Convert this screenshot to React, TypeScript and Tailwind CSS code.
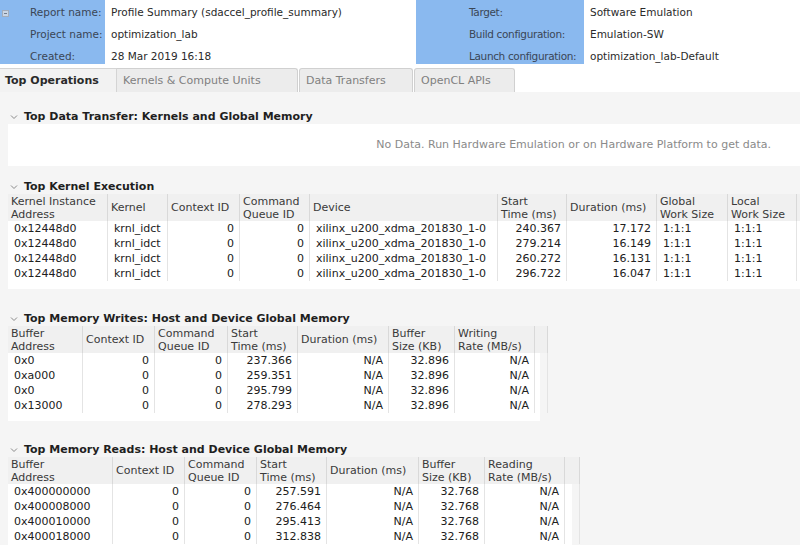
import React from "react";

type Col = { h: string[]; right?: boolean };

const kernelCols: Col[] = [
  { h: ["Kernel Instance", "Address"] },
  { h: ["Kernel"] },
  { h: ["Context ID"], right: true },
  { h: ["Command", "Queue ID"], right: true },
  { h: ["Device"] },
  { h: ["Start", "Time (ms)"], right: true },
  { h: ["Duration (ms)"], right: true },
  { h: ["Global", "Work Size"] },
  { h: ["Local", "Work Size"] },
  { h: [] },
];

const kernelRows = [
  ["0x12448d0", "krnl_idct", "0", "0", "xilinx_u200_xdma_201830_1-0", "240.367", "17.172", "1:1:1", "1:1:1", ""],
  ["0x12448d0", "krnl_idct", "0", "0", "xilinx_u200_xdma_201830_1-0", "279.214", "16.149", "1:1:1", "1:1:1", ""],
  ["0x12448d0", "krnl_idct", "0", "0", "xilinx_u200_xdma_201830_1-0", "260.272", "16.131", "1:1:1", "1:1:1", ""],
  ["0x12448d0", "krnl_idct", "0", "0", "xilinx_u200_xdma_201830_1-0", "296.722", "16.047", "1:1:1", "1:1:1", ""],
];

const writeCols: Col[] = [
  { h: ["Buffer", "Address"] },
  { h: ["Context ID"], right: true },
  { h: ["Command", "Queue ID"], right: true },
  { h: ["Start", "Time (ms)"], right: true },
  { h: ["Duration (ms)"], right: true },
  { h: ["Buffer", "Size (KB)"], right: true },
  { h: ["Writing", "Rate (MB/s)"], right: true },
  { h: [] },
];

const writeRows = [
  ["0x0", "0", "0", "237.366", "N/A", "32.896", "N/A", ""],
  ["0xa000", "0", "0", "259.351", "N/A", "32.896", "N/A", ""],
  ["0x0", "0", "0", "295.799", "N/A", "32.896", "N/A", ""],
  ["0x13000", "0", "0", "278.293", "N/A", "32.896", "N/A", ""],
];

const readCols: Col[] = [
  { h: ["Buffer", "Address"] },
  { h: ["Context ID"], right: true },
  { h: ["Command", "Queue ID"], right: true },
  { h: ["Start", "Time (ms)"], right: true },
  { h: ["Duration (ms)"], right: true },
  { h: ["Buffer", "Size (KB)"], right: true },
  { h: ["Reading", "Rate (MB/s)"], right: true },
  { h: [] },
];

const readRows = [
  ["0x400000000", "0", "0", "257.591", "N/A", "32.768", "N/A", ""],
  ["0x400008000", "0", "0", "276.464", "N/A", "32.768", "N/A", ""],
  ["0x400010000", "0", "0", "295.413", "N/A", "32.768", "N/A", ""],
  ["0x400018000", "0", "0", "312.838", "N/A", "32.768", "N/A", ""],
];

function Chevron() {
  return (
    <svg width="8" height="6" viewBox="0 0 8 6" className="mr-[6px] mt-[1px]">
      <polyline points="1,1.5 4,4.5 7,1.5" fill="none" stroke="#8a8a8a" strokeWidth="1" />
    </svg>
  );
}

function SectionTitle({ children }: { children: React.ReactNode }) {
  return (
    <div className="h-[15px] flex items-start pl-[10px]">
      <div className="h-[15px] flex items-center">
        <Chevron />
        <span className="font-bold text-[11px] leading-[15px] text-[#1f1f1f]">{children}</span>
      </div>
    </div>
  );
}

function DataTable({ cols, rows, grid }: { cols: Col[]; rows: string[][]; grid: string }) {
  return (
    <div className="ml-[8px]">
      <div className={grid}>
        {cols.map((c, i) => (
          <div
            key={i}
            className="h-[27px] flex flex-col justify-center bg-[#f0f0f0] border-r border-[#d9d9d9] pl-[3px] text-[11px] leading-[13px] text-[#3a3a3a] whitespace-nowrap overflow-hidden"
          >
            {c.h.map((l, j) => (
              <div key={j}>{l}</div>
            ))}
          </div>
        ))}
      </div>
      <div className={grid + " bg-white"}>
        {rows.map((r, ri) =>
          r.map((v, ci) => (
            <div
              key={ri + "-" + ci}
              className={
                "h-[15px] leading-[15px] text-[11px] text-[#202020] border-r border-[#e4e4e4] whitespace-nowrap overflow-hidden " +
                (cols[ci].right ? "text-right pr-[5px]" : "text-left pl-[6px]")
              }
            >
              {v}
            </div>
          ))
        )}
      </div>
      <div className="h-[8px] bg-white" />
    </div>
  );
}

function HeaderLabels({ items, tight }: { items: string[]; tight?: boolean }) {
  return (
    <>
      {items.map((t) => (
        <div
          key={t}
          className={"h-[22px] leading-[22px] whitespace-nowrap " + (tight ? "tracking-[-0.35px]" : "")}
        >
          {t}
        </div>
      ))}
    </>
  );
}

export default function App() {
  return (
    <div className="w-[800px] h-[545px] overflow-hidden bg-[#f5f5f5] font-['DejaVu_Sans',sans-serif]">
      {/* Header */}
      <div className="flex h-[67px] bg-white text-[10.5px] text-[#2a2a2a]">
        <div className="relative w-[105px] h-[64px] bg-[#8ab9ef] pl-[30px] pt-px text-[#3a4656]">
          <div className="absolute left-[2px] top-[10px] w-[7px] h-[7px] border border-[#a3adbb] bg-[#c9d6e6] flex items-center justify-center">
            <div className="w-[3px] h-px bg-[#6f7c8c]" />
          </div>
          <HeaderLabels items={["Report name:", "Project name:", "Created:"]} />
        </div>
        <div className="w-[311px] pl-[6px] pt-px">
          <HeaderLabels items={["Profile Summary (sdaccel_profile_summary)", "optimization_lab", "28 Mar 2019 16:18"]} />
        </div>
        <div className="w-[168px] h-[64px] bg-[#8ab9ef] pl-[53px] pt-px text-[#3a4656]">
          <HeaderLabels tight items={["Target:", "Build configuration:", "Launch configuration:"]} />
        </div>
        <div className="pl-[6px] pt-px">
          <HeaderLabels items={["Software Emulation", "Emulation-SW", "optimization_lab-Default"]} />
        </div>
      </div>

      {/* Tabs */}
      <div className="h-[25px] pt-[1px] bg-white flex text-[11px] leading-[23px]">
        <div className="w-[117px] bg-[#f2f2f2] border-t border-r border-[#d4d4d4] pl-[5px] font-bold text-[#2a2a2a]">
          Top Operations
        </div>
        <div className="w-[181px] bg-[#ececec] border-t border-r border-[#d0d0d0] rounded-tr-[3px] pl-[6px] text-[#808080]">
          Kernels &amp; Compute Units
        </div>
        <div className="w-[114px] ml-px bg-[#ececec] border-t border-l border-r border-[#d0d0d0] rounded-t-[3px] pl-[6px] text-[#808080]">
          Data Transfers
        </div>
        <div className="w-[101px] ml-px bg-[#ececec] border-t border-l border-r border-[#d0d0d0] rounded-t-[3px] pl-[6px] text-[#808080]">
          OpenCL APIs
        </div>
      </div>

      {/* Content */}
      <div className="pt-[17px]">
        <SectionTitle>Top Data Transfer: Kernels and Global Memory</SectionTitle>
        <div className="ml-[8px] h-[42px] bg-white flex items-center justify-end pr-[29px] text-[11px] text-[#8a8a8a]">
          No Data. Run Hardware Emulation or on Hardware Platform to get data.
        </div>

        <div className="mt-[13px]">
          <SectionTitle>Top Kernel Execution</SectionTitle>
          <DataTable
            cols={kernelCols}
            rows={kernelRows}
            grid="grid grid-cols-[100px_60px_72px_70px_188px_69px_90px_71px_69px_3px]"
          />
        </div>

        <div className="mt-[22px]">
          <SectionTitle>Top Memory Writes: Host and Device Global Memory</SectionTitle>
          <div className="w-[540px]">
            <DataTable
              cols={writeCols}
              rows={writeRows}
              grid="grid grid-cols-[75px_72px_73px_70px_91px_66px_80px_13px]"
            />
          </div>
        </div>

        <div className="mt-[21px]">
          <SectionTitle>Top Memory Reads: Host and Device Global Memory</SectionTitle>
          <div className="w-[572px]">
            <DataTable
              cols={readCols}
              rows={readRows}
              grid="grid grid-cols-[105px_72px_72px_70px_92px_66px_80px_15px]"
            />
          </div>
        </div>
      </div>
    </div>
  );
}
